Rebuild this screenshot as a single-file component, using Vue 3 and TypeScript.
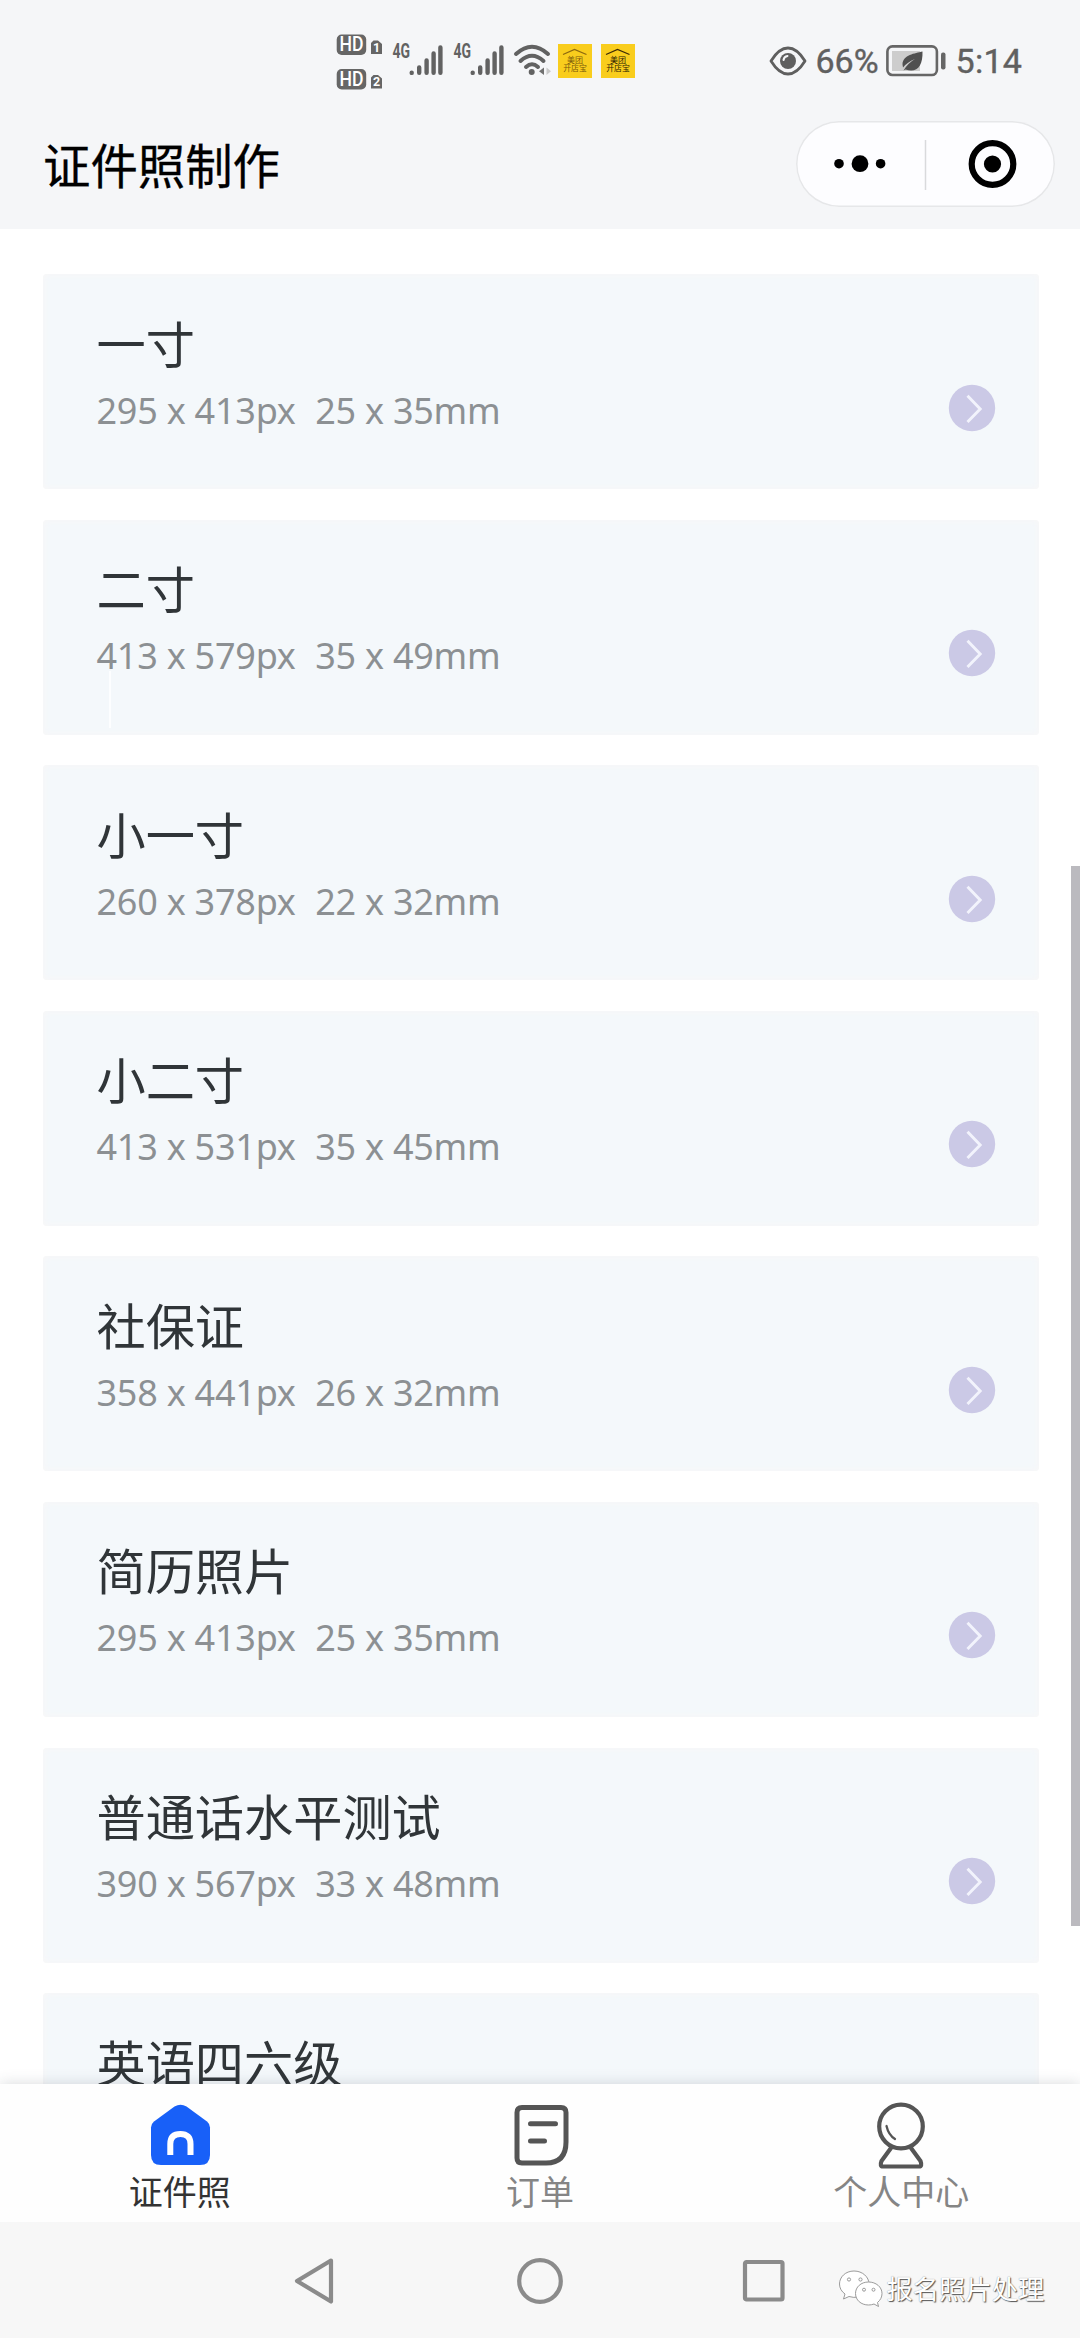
<script setup lang="ts">
interface PhotoSize {
  name: string
  pixels?: string
  print?: string
  marked?: boolean
}

const sizes: PhotoSize[] = [
  { name: '一寸', pixels: '295 x 413px', print: '25 x 35mm' },
  { name: '二寸', pixels: '413 x 579px', print: '35 x 49mm', marked: true },
  { name: '小一寸', pixels: '260 x 378px', print: '22 x 32mm' },
  { name: '小二寸', pixels: '413 x 531px', print: '35 x 45mm' },
  { name: '社保证', pixels: '358 x 441px', print: '26 x 32mm' },
  { name: '简历照片', pixels: '295 x 413px', print: '25 x 35mm' },
  { name: '普通话水平测试', pixels: '390 x 567px', print: '33 x 48mm' },
  { name: '英语四六级' },
]
</script>

<template>
  <div class="screen">
    <header class="top">
      <div class="status">
        <svg class="hd" width="47" height="58" viewBox="0 0 47 58">
          <g v-for="n in 2" :key="n" :transform="`translate(0 ${(n - 1) * 34.5})`">
            <rect x="0.7" y="0.5" width="29.5" height="20.5" rx="5" fill="#666" />
            <text x="15.5" y="17.2" class="hd-text" text-anchor="middle" textLength="24" lengthAdjust="spacingAndGlyphs">HD</text>
            <path d="M37.500 6.500H42L46 10V20H35V9Z" fill="#666" />
            <text x="40.500" y="17.800" class="hd-num" text-anchor="middle">{{ n }}</text>
          </g>
        </svg>
        <svg v-for="n in 2" :key="'s' + n" class="signal" width="52" height="34" viewBox="0 0 52 34">
          <text x="0.500" y="15" class="gen" textLength="17.500" lengthAdjust="spacingAndGlyphs">4G</text>
          <g stroke="#626262" stroke-width="4.400" stroke-linecap="round">
            <path d="M19.700 29.800V29.900M27.200 24.500V29.800M34.600 17.500V29.800M41.600 10.500V29.800M48.400 4.500V29.800" />
          </g>
        </svg>
        <svg class="wifi" width="40" height="34" viewBox="0 0 40 34">
          <g fill="none" stroke="#626262" stroke-width="4" stroke-linecap="round">
            <path d="M3 11Q19 -3.500 35 11" />
            <path d="M7.500 18Q19 7.500 30.500 18" />
            <path d="M13 24Q19 18.500 25 24" />
          </g>
          <circle cx="18.700" cy="29" r="3" fill="#626262" />
          <path d="M31 24.500V32L26 28.300Z" fill="#707070" />
          <path d="M33.500 24.500V32L38 28.300Z" fill="#c9c9c9" />
        </svg>
        <svg v-for="n in 2" :key="'b' + n" class="badge" :class="{ dim: n === 1 }" width="34" height="34" viewBox="0 0 34 34">
          <rect width="34" height="34" fill="#f9cd1d" />
          <path class="roof" d="M5 10.500L16.500 5.500L28.500 10.500" fill="none" stroke-width="1.300" />
          <text x="17" y="18.500" text-anchor="middle" textLength="16" lengthAdjust="spacingAndGlyphs">美团</text>
          <text x="17" y="27" text-anchor="middle" textLength="23.500" lengthAdjust="spacingAndGlyphs">开店宝</text>
        </svg>
        <svg class="eye" width="38" height="32" viewBox="0 0 38 32">
          <path d="M2 16Q10 3 19 3T36 16Q28 29 19 29T2 16Z" fill="none" stroke="#5f5f5f" stroke-width="2.800" stroke-linejoin="round" />
          <circle cx="19" cy="16" r="8" fill="#5f5f5f" />
          <path d="M14.500 15Q15 11.500 18.500 11" fill="none" stroke="#f5f6f8" stroke-width="2" stroke-linecap="round" />
        </svg>
        <span class="percent">66%</span>
        <svg class="battery" width="60" height="32" viewBox="0 0 60 32">
          <rect x="1.400" y="1.400" width="49.500" height="28.600" rx="5" fill="none" stroke="#666" stroke-width="2.600" />
          <rect x="6" y="6" width="28" height="20" fill="#cdcdcd" />
          <path d="M36.500 6.500C29 8.500 17 9.500 16.500 19.500L17 22.500Q22 16.500 29 14Q22 18 17.500 25.500L19.500 24.500C31 28.500 37 21 36.500 6.500Z" fill="#505050" />
          <rect x="55" y="7.500" width="4.500" height="17" rx="2" fill="#666" />
        </svg>
        <span class="time">5:14</span>
      </div>
      <div class="titlebar">
        <h1>证件照制作</h1>
        <div class="capsule">
          <svg width="259" height="86" viewBox="0 0 259 86">
            <circle cx="43" cy="42.700" r="4.800" />
            <circle cx="64" cy="42.700" r="8.400" />
            <circle cx="84.600" cy="42.700" r="4.800" />
            <path d="M129.500 19V69" stroke="#d9dadc" stroke-width="1.500" />
            <circle cx="196.500" cy="43" r="20.800" fill="none" stroke="#000" stroke-width="6.200" />
            <circle cx="196.500" cy="43" r="8.600" />
          </svg>
        </div>
      </div>
    </header>

    <main class="list">
      <article v-for="s in sizes" :key="s.name" class="card" :class="{ marked: s.marked }">
        <div class="info">
          <h2>{{ s.name }}</h2>
          <p v-if="s.pixels"><span>{{ s.pixels }}</span><span>{{ s.print }}</span></p>
        </div>
        <svg class="go" width="48" height="48" viewBox="0 0 48 48">
          <circle cx="24" cy="24" r="23.200" fill="#cbc9e6" />
          <path d="M19.500 11.800L32.200 25L19.500 38" fill="none" stroke="#f2f3fc" stroke-width="2.900" />
        </svg>
      </article>
      <i class="scrollbar"></i>
    </main>

    <nav class="tabs">
      <div class="tab active">
        <svg width="70" height="70" viewBox="0 0 70 70">
          <path d="M29.500 5.500Q35.500 1.800 41.500 5.500L62 20.500Q65 23 65 26.500V54Q65 64 55 64H16Q6 64 6 54V26.500Q6 23 9 20.500Z" fill="#1860f8" />
          <path d="M25.300 54V43Q25.300 33 35.400 33T45.500 43V54" fill="none" stroke="#fff" stroke-width="6" />
        </svg>
        <span>证件照</span>
      </div>
      <div class="tab">
        <svg width="70" height="70" viewBox="0 0 70 70">
          <g fill="none" stroke="#555" stroke-width="5" stroke-linejoin="round" stroke-linecap="round">
            <path d="M17 6.500H56Q61 6.500 61 11.500V41Q61 62 41 62H17Q12 62 12 57V11.500Q12 6.500 17 6.500Z" />
            <path d="M25.500 22.700H50.500M25.500 40H39.500" />
          </g>
        </svg>
        <span>订单</span>
      </div>
      <div class="tab">
        <svg width="70" height="70" viewBox="0 0 70 70">
          <g fill="none" stroke="#555" stroke-width="4.200" stroke-linejoin="round" stroke-linecap="round">
            <circle cx="35" cy="25.500" r="21.800" />
            <path d="M25 47L15.500 60Q13.500 65.500 17 65.500H53Q56.500 65.500 54.500 60L45 47" />
            <path d="M20.500 25Q22.500 34 29 38" stroke-width="2.300" />
          </g>
        </svg>
        <span>个人中心</span>
      </div>
    </nav>

    <footer class="system">
      <svg class="back" width="44" height="50" viewBox="0 0 44 50">
        <path d="M39 4.500L5 25L39 45.500Z" fill="none" stroke="#8b8b8b" stroke-width="4.200" stroke-linejoin="round" />
      </svg>
      <svg class="home" width="50" height="50" viewBox="0 0 50 50">
        <circle cx="25" cy="25" r="20.800" fill="none" stroke="#8b8b8b" stroke-width="4.200" />
      </svg>
      <svg class="recent" width="46" height="46" viewBox="0 0 46 46">
        <rect x="4" y="4" width="37.500" height="37.500" rx="1.500" fill="none" stroke="#8b8b8b" stroke-width="4.200" />
      </svg>
      <div class="mark">
        <svg width="46" height="40" viewBox="0 0 46 40">
          <g fill="#fff" stroke="#909090" stroke-width="0.900">
            <path d="M16 2C7.500 2 1.500 8 1.500 15C1.500 19 3.500 22.500 7 25L5.500 30L11 27.500Q16 29 20 28C27 26 31 20 31 15C31 8 24.500 2 16 2Z" />
            <path d="M30.500 13C23 13 17.500 18 17.500 24.500C17.500 31 23 36 30.500 36Q33.500 36 36 35L40.500 37.500L39.500 33.500C42.500 31 44 28 44 24.500C44 18 38 13 30.500 13Z" />
            <circle cx="11" cy="10.500" r="1.600" />
            <circle cx="22.500" cy="10.500" r="1.600" />
            <circle cx="26" cy="20.700" r="1.500" />
            <circle cx="35.500" cy="20.700" r="1.500" />
          </g>
        </svg>
        <span>报名照片处理</span>
      </div>
    </footer>
  </div>
</template>

<style>
body {
  margin: 0;
  background: #fff;
}
</style>

<style scoped>
.screen {
  width: 1080px;
  height: 2338px;
  display: flex;
  flex-direction: column;
  overflow: hidden;
  font-family: "Noto Sans", "Noto Sans CJK SC", sans-serif;
  background: #fff;
}
svg {
  display: block;
  flex: none;
  overflow: visible;
}
h1, h2, p {
  margin: 0;
  font-weight: 400;
}
.top {
  height: 229px;
  flex: none;
  background: #f5f6f8;
}
.status {
  height: 121px;
  display: flex;
  align-items: flex-start;
  padding-left: 336px;
  font-family: Roboto, sans-serif;
}
.hd {
  margin-top: 34px;
}
.hd-text {
  fill: #fff;
  font-size: 19.500px;
  font-weight: 500;
}
.hd-num {
  fill: #fff;
  font-size: 12.500px;
  font-weight: 700;
}
.gen {
  fill: #626262;
  font-size: 20px;
  font-weight: 700;
}
.signal {
  margin: 43px 0 0 9px;
}
.wifi {
  margin: 43px 0 0 8px;
}
.badge {
  margin: 43.500px 0 0 5px;
}
.badge + .badge {
  margin-left: 9px;
}
.badge text {
  font-family: "Noto Sans CJK SC", sans-serif;
  font-size: 8px;
  font-weight: 400;
  fill: #2c1c04;
}
.badge .roof {
  stroke: #3c2a08;
}
.badge.dim text {
  fill: #7a5a0c;
}
.badge.dim .roof {
  stroke: #8c6810;
}
.eye {
  margin: 45px 0 0 133.500px;
}
.percent, .time {
  font-size: 34px;
  line-height: 40px;
  color: #606060;
  margin-top: 41px;
  -webkit-text-stroke: 0.400px #606060;
}
.percent {
  width: 64px;
  margin-left: 9px;
}
.battery {
  margin: 45px 0 0 6px;
}
.time {
  margin-left: 10px;
  letter-spacing: 0.300px;
}
.titlebar {
  display: flex;
  justify-content: space-between;
  align-items: flex-start;
  padding: 0 25.500px 0 43px;
}
h1 {
  font-family: "Noto Sans CJK SC", sans-serif;
  font-size: 47.400px;
  line-height: 90px;
  margin-top: -2px;
  color: #000;
  -webkit-text-stroke: 0.300px #000;
}
.capsule {
  width: 259px;
  height: 86px;
  border-radius: 43px;
  background: #fdfdff;
  box-shadow: inset 0 0 0 1.500px #e6e7e9;
}
.list {
  position: relative;
  flex: none;
  box-sizing: border-box;
  height: 1855px;
  padding: 45px 41px 0 43px;
  display: flex;
  flex-direction: column;
  gap: 30.600px;
  overflow: hidden;
}
.card {
  box-sizing: border-box;
  height: 215px;
  flex: none;
  display: flex;
  justify-content: space-between;
  padding: 0 43px 0 53.500px;
  border-radius: 4px;
  background: #f4f8fb;
  box-shadow: inset 0 0 5px 2px #f7f7f8;
  position: relative;
}
.card.marked::after {
  content: "";
  position: absolute;
  left: 66px;
  top: 151px;
  width: 2px;
  height: 57px;
  background: #fdfeff;
}
h2 {
  font-family: "Noto Sans CJK SC", sans-serif;
  font-size: 49.200px;
  line-height: 60px;
  margin-top: 37.500px;
  color: #303538;
}
.card p {
  font-size: 36px;
  line-height: 50px;
  margin-top: 14px;
  display: flex;
  gap: 19.500px;
  letter-spacing: -0.240px;
  color: #8c9093;
  white-space: nowrap;
}
.go {
  margin-top: 109.500px;
}
.scrollbar {
  position: absolute;
  right: 0;
  top: 637px;
  width: 9px;
  height: 1060px;
  background: #bbbabf;
}
.tabs {
  position: relative;
  height: 138px;
  flex: none;
  display: flex;
  background: #fefefe;
  box-shadow: 0 0 14px rgba(60, 70, 80, 0.2);
}
.tab {
  flex: 1 1 0;
  box-sizing: border-box;
  display: flex;
  flex-direction: column;
  align-items: center;
  padding: 17px 0 0 1px;
  font-family: "Noto Sans CJK SC", sans-serif;
  color: #858585;
}
.tab:nth-child(2) {
  padding-left: 3px;
}
.tab:nth-child(3) {
  padding-left: 4px;
}
.tab span {
  font-size: 34px;
  line-height: 44px;
  margin-top: -2px;
}
.tab.active {
  color: #333;
}
.system {
  position: relative;
  flex: 1;
  display: flex;
  align-items: flex-start;
  padding-left: 292px;
  background: #f7f7f7;
}
.back {
  margin-top: 34px;
}
.home {
  margin: 34px 0 0 178.500px;
}
.recent {
  margin: 36px 0 0 176px;
}
.mark {
  display: flex;
  align-items: flex-start;
  margin: 47px 0 0 51px;
  font-family: "Noto Sans CJK SC", sans-serif;
}
.mark span {
  margin: 0 0 0 3px;
  font-size: 26.300px;
  line-height: 38px;
  color: #fff;
  text-shadow: 1px 1px 1px #555, 0 0 1px #888;
  white-space: nowrap;
}
</style>
